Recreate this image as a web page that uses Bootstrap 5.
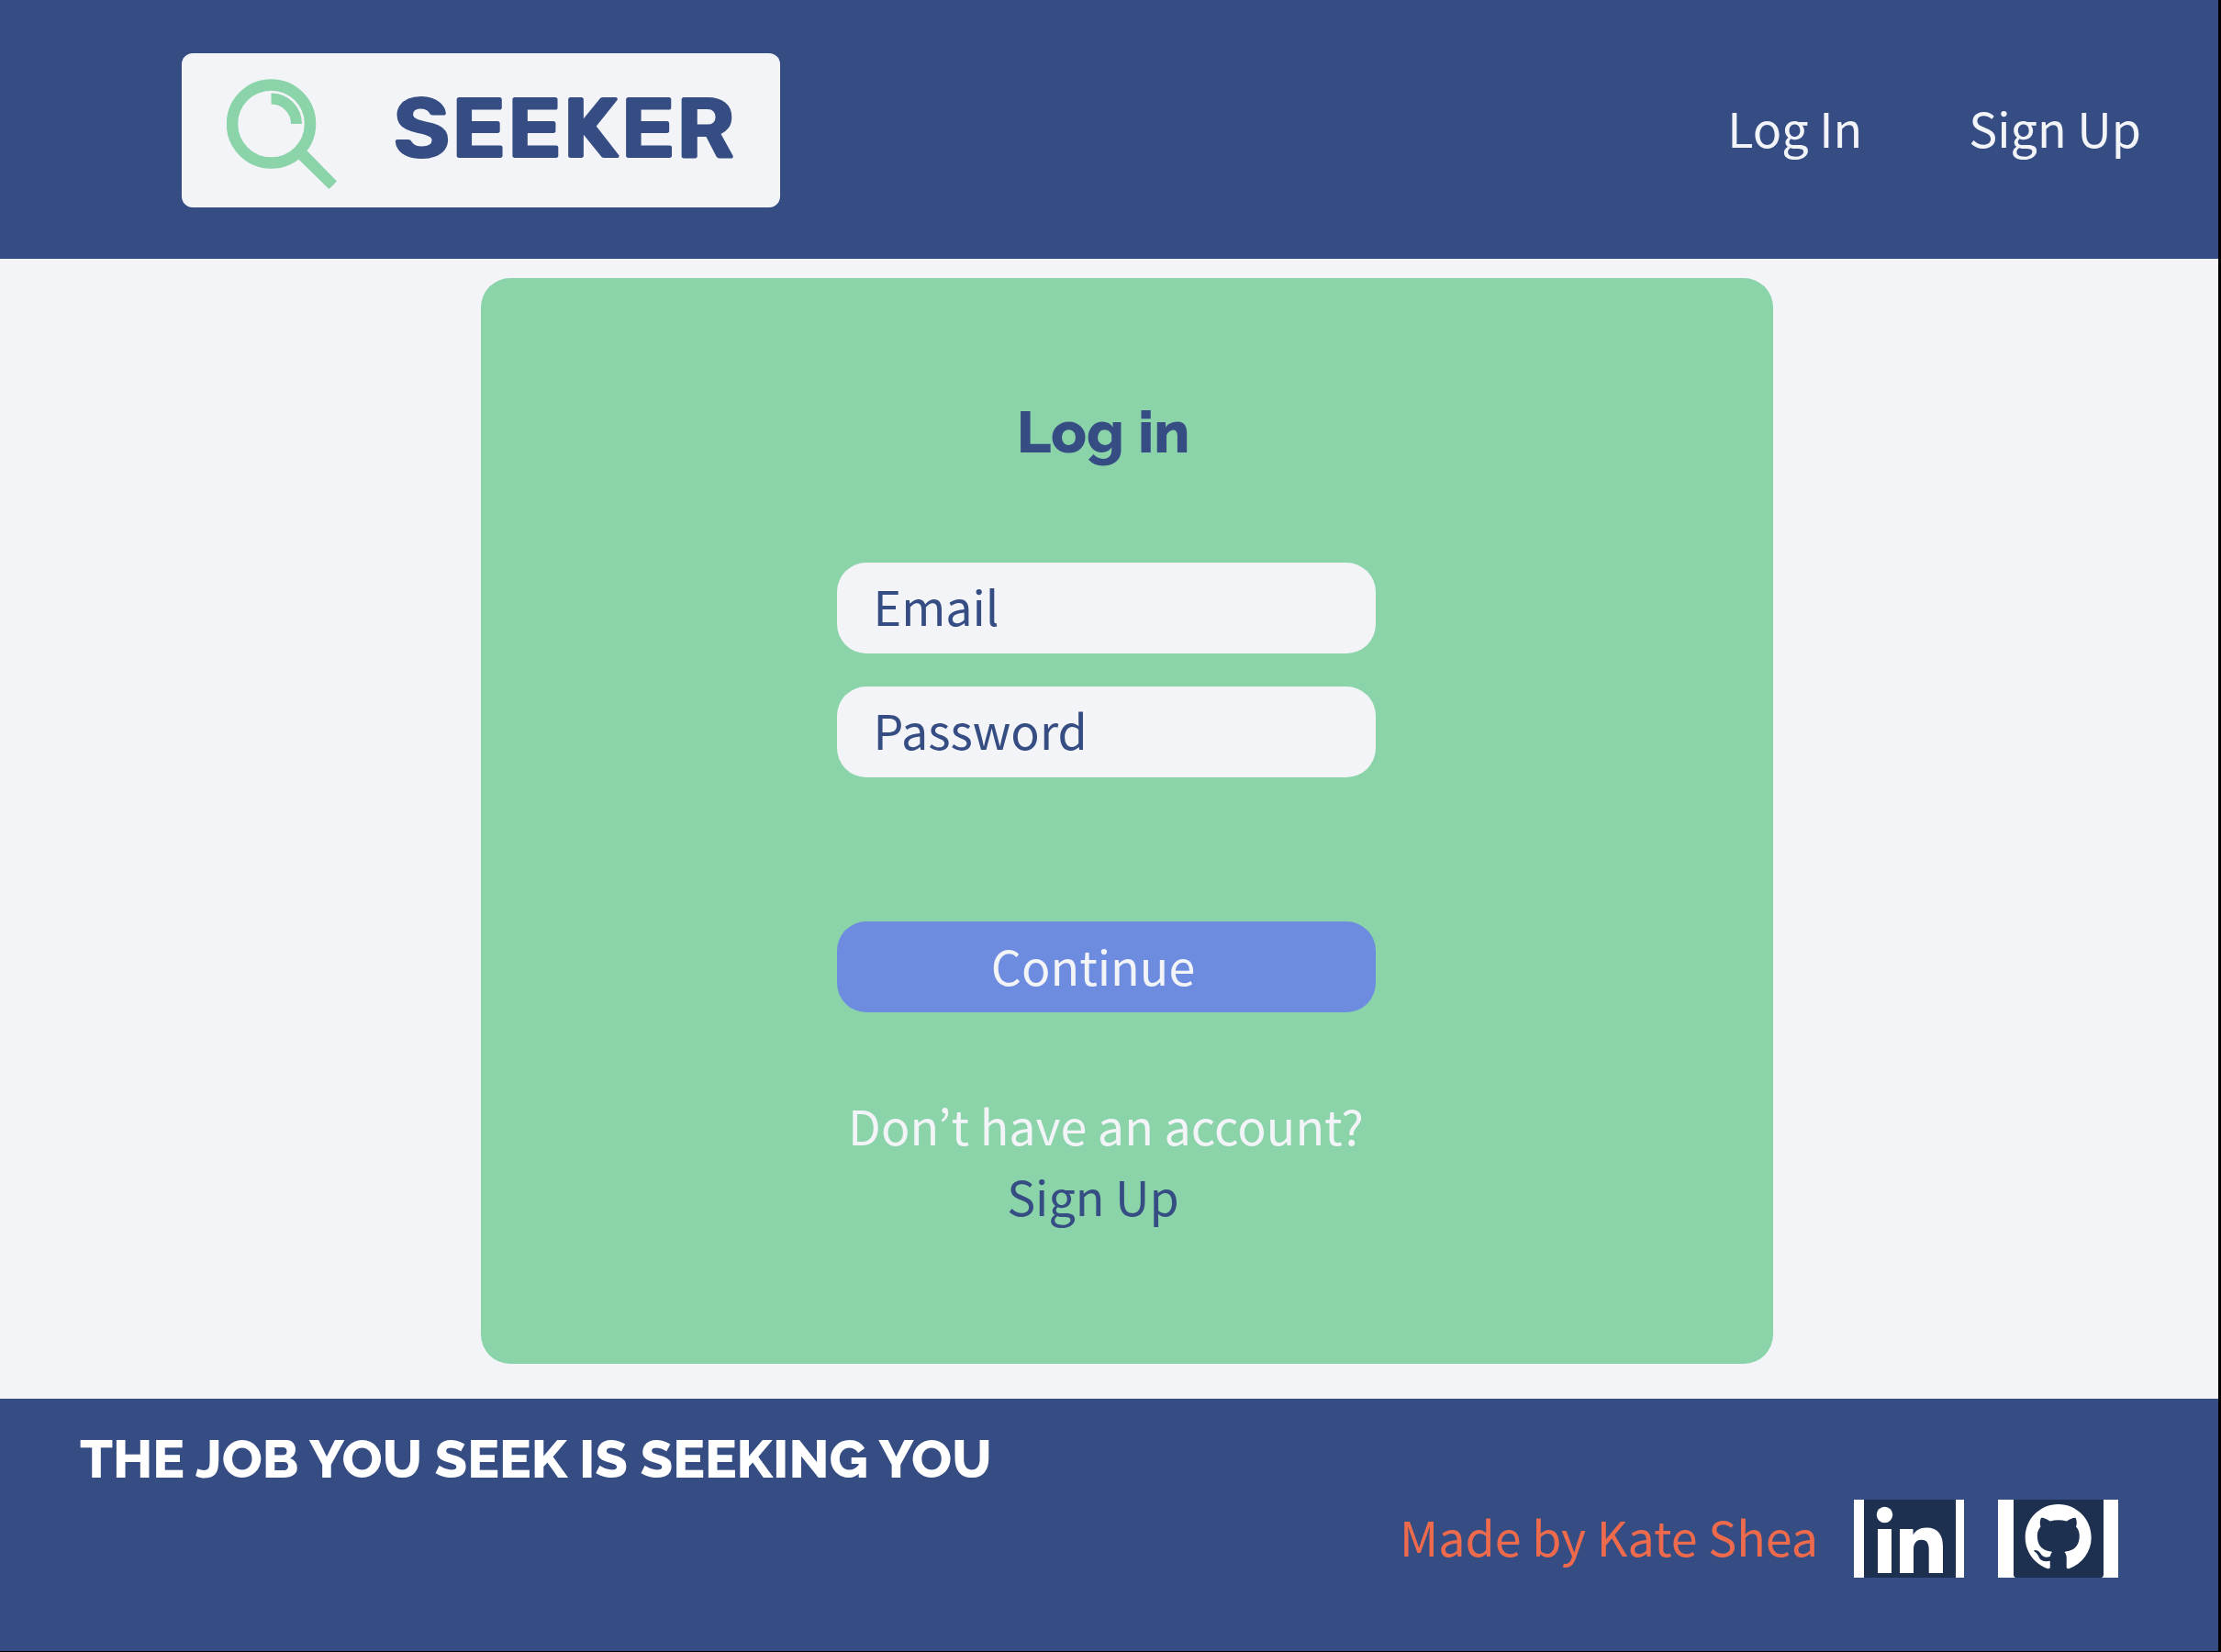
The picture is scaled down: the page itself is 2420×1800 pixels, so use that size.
<!DOCTYPE html>
<html lang="en">
<head>
<meta charset="utf-8">
<meta name="viewport" content="width=device-width, initial-scale=1">
<title>Seeker - Log in</title>
<link href="https://cdn.jsdelivr.net/npm/bootstrap@5.3.0/dist/css/bootstrap.min.css" rel="stylesheet">
<style>
  :root { --navy: #364d84; --paper: #f2f4f8; --mint: #8bd3a9; --peri: #6e8cdf; --coral: #ed6a4c; }
  body { font-family: "Noto Sans CJK KR", "Noto Sans", sans-serif; font-size: 52px; line-height: 76px; color: var(--navy); background: var(--paper); border-right: 3px solid #000; border-bottom: 1px solid #000; }
  .site-top { background: var(--navy); padding: 58px 84px 56px 198px; }
  .brand-box { background: var(--paper); border-radius: 12px; height: 168px; padding: 0 48px 4px 49px; gap: 60px; color: var(--navy); font: 700 95px/112px Rubik, Inter, sans-serif; }
  .brand-box svg { margin-top: 12px; }
  .top-links { gap: 116px; padding-bottom: 6px; }
  .top-links a { color: var(--paper); }
  .stage { padding: 21px 0 38px 39px; }
  .login-panel { background: var(--mint); border-radius: 32px; width: 1408px; max-width: 100%; padding: 130px 46px 118px 0; }
  .login-form { width: 587px; max-width: 100%; }
  .login-title { font: 800 64px/76px Raleway, Lato, sans-serif; padding-right: 6px; margin-bottom: 104px; color: var(--navy); }
  .login-field, .login-field:focus { height: 99px; border: 0; border-radius: 32px; background: var(--paper); color: var(--navy); font-size: 52px; padding: 0 40px 8px; }
  .field-slot { display: grid; text-align: left; }
  .field-slot > * { grid-area: 1 / 1; }
  .field-slot label { z-index: 1; pointer-events: none; padding: 9px 40px 14px; }
  .login-field:not(:placeholder-shown) + label { display: none; }
  .field-stack { gap: 36px; margin-bottom: 157px; }
  .login-submit, .login-submit:hover { height: 99px; border: 0; border-radius: 32px; background: var(--peri); color: var(--paper); font-size: 52px; line-height: 76px; padding: 10px 28px 14px 0; margin-bottom: 85px; }
  .signup-prompt { color: var(--paper); white-space: nowrap; }
  .signup-link { color: var(--navy); padding: 1px 28px 0 0; }
  .site-foot { background: var(--navy); padding: 28px 109px 80px 87px; }
  .tagline { color: #fff; font: 800 58px/76px Raleway, Lato, sans-serif; margin-bottom: 6px; }
  .credit { gap: 37px; color: var(--coral); }
  .credit span { padding: 0 2px 5px 0; }
  .credit svg, .brand-box svg { display: block; }
</style>
<script src="https://cdn.jsdelivr.net/npm/bootstrap@5.3.0/dist/js/bootstrap.bundle.min.js"></script>
</head>
<body class="min-vh-100 d-flex flex-column">
<header class="site-top d-flex flex-wrap align-items-center justify-content-between">
  <a class="brand-box d-flex align-items-center text-decoration-none" href="#">
    <svg width="121" height="121" viewBox="0 0 121 121" aria-hidden="true">
      <circle cx="48.500" cy="49" r="42.500" fill="none" stroke="#8bd3a9" stroke-width="12.500"/>
      <path d="M48.500 21.500A27.500 27.500 0 0 1 76 49" fill="none" stroke="#8bd3a9" stroke-width="12"/>
      <path d="M87.500 78.300 120 111.500 111.500 120 78.500 87.700z" fill="#8bd3a9"/>
    </svg>
    <span>SEEKER</span>
  </a>
  <nav class="top-links d-flex">
    <a class="text-decoration-none" href="#">Log In</a>
    <a class="text-decoration-none" href="#">Sign Up</a>
  </nav>
</header>
<main class="stage flex-grow-1 d-flex justify-content-center">
  <section class="login-panel d-flex justify-content-center">
    <form class="login-form text-center">
      <h1 class="login-title">Log in</h1>
      <div class="field-stack d-flex flex-column">
        <div class="field-slot"><input class="form-control login-field" id="email" type="email" placeholder=" "><label for="email">Email</label></div>
        <div class="field-slot"><input class="form-control login-field" id="password" type="password" placeholder=" "><label for="password">Password</label></div>
      </div>
      <button class="btn login-submit w-100 d-block" type="submit">Continue</button>
      <div class="signup-prompt">Don’t have an account?</div>
      <a class="signup-link d-block text-decoration-none" href="#">Sign Up</a>
    </form>
  </section>
</main>
<footer class="site-foot">
  <div class="tagline">THE JOB YOU SEEK IS SEEKING YOU</div>
  <div class="credit d-flex align-items-center justify-content-end">
    <span>Made by Kate Shea</span>
    <a href="#" aria-label="LinkedIn">
      <svg width="120" height="85" viewBox="0 0 120 85" aria-hidden="true">
        <path fill="#fff" d="M0 0h120v85H0z"/><path fill="#1e3050" d="M11 0h100v85H11z"/>
        <circle cx="33.500" cy="16.500" r="8.700" fill="#fff"/>
        <path fill="#fff" d="M26 32h15v48H26zM50 32h14.500v6.500C67 33.500 72 30.500 79 30.500c13 0 18 8 18 21V80H81.700V54.500c0-6-1.700-10.800-8-10.800-6.500 0-8.700 4.800-8.700 10.800V80H50z"/>
      </svg>
    </a>
    <a href="#" aria-label="GitHub">
      <svg width="131" height="85" viewBox="0 0 131 85" aria-hidden="true">
        <path fill="#fff" d="M0 0h131v85H0z"/><path fill="#1e3050" d="M17 0h98v81a4 4 0 0 1-2 4H19a4 4 0 0 1-2-4z"/>
        <path fill="#fff" transform="translate(29.700 5) scale(4.500)" d="M8 0C3.580 0 0 3.580 0 8c0 3.540 2.290 6.530 5.470 7.590.4.070.55-.17.55-.38 0-.19-.01-.82-.01-1.490-2.010.37-2.530-.49-2.690-.94-.09-.23-.48-.94-.82-1.130-.28-.15-.68-.52-.01-.53.63-.01 1.080.58 1.230.82.72 1.210 1.870.87 2.330.66.07-.52.28-.87.51-1.070-1.780-.2-3.640-.89-3.640-3.950 0-.87.31-1.590.82-2.150-.08-.2-.36-1.020.08-2.120 0 0 .67-.21 2.200.82.64-.18 1.320-.27 2-.27s1.360.09 2 .27c1.530-1.040 2.200-.82 2.200-.82.44 1.100.16 1.920.08 2.120.51.56.82 1.270.82 2.150 0 3.070-1.870 3.750-3.650 3.950.29.25.54.73.54 1.480 0 1.070-.01 1.930-.01 2.200 0 .21.15.46.55.38A8.010 8.010 0 0 0 16 8c0-4.420-3.580-8-8-8z"/>
      </svg>
    </a>
  </div>
</footer>
</body>
</html>
